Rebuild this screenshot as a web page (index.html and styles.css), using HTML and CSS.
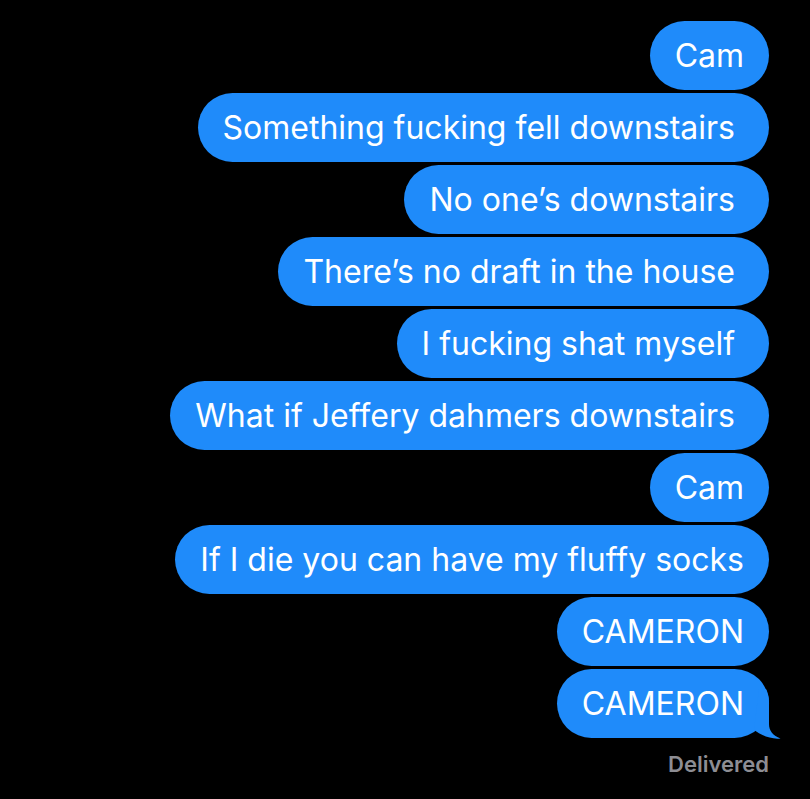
FILE: index.html
```html
<!DOCTYPE html>
<html lang="en">
<head>
  <meta charset="UTF-8" />
  <title>Messages</title>
  <link rel="stylesheet" href="styles.css">
</head>
<body>

<div class="thread">
  <div class="bubble">Cam</div>
  <div class="bubble">Something fucking fell downstairs&nbsp;</div>
  <div class="bubble">No one’s downstairs&nbsp;</div>
  <div class="bubble">There’s no draft in the house&nbsp;</div>
  <div class="bubble">I fucking shat myself&nbsp;</div>
  <div class="bubble">What if Jeffery dahmers downstairs&nbsp;</div>
  <div class="bubble">Cam</div>
  <div class="bubble">If I die you can have my fluffy socks</div>
  <div class="bubble">CAMERON</div>
  <div class="bubble last">
    CAMERON
    <svg class="tail" width="36" height="50" viewBox="0 0 36 50">
      <path d="M21 0 C23 4 24 8 24 13 V35 C24 42 28 46.5 35.5 49.5 C27 50.5 18 47.5 9 41 L14 0 Z" fill="#1f8bfa"/>
    </svg>
  </div>
  <div class="status">Delivered</div>
</div>

</body>
</html>
```

FILE: styles.css
```css
body {
  margin: 0;
  background-color: #000;
  font-family: Inter, "Noto Sans", sans-serif;
}
.thread {
  display: flex;
  flex-direction: column;
  align-items: flex-end;
  gap: 3px;
  padding: 21px 41px 0 0;
}
.bubble {
  position: relative;
  background-color: #1f8bfa;
  color: #fff;
  font-size: 32px;
  line-height: 43px;
  padding: 13px 25px;
  border-radius: 35px;
  white-space: nowrap;
}
.tail {
  position: absolute;
  right: -12px;
  bottom: -1px;
}
.status {
  margin-top: 10px;
  color: #8d8d93;
  font-size: 22px;
  font-weight: 600;
}
```
